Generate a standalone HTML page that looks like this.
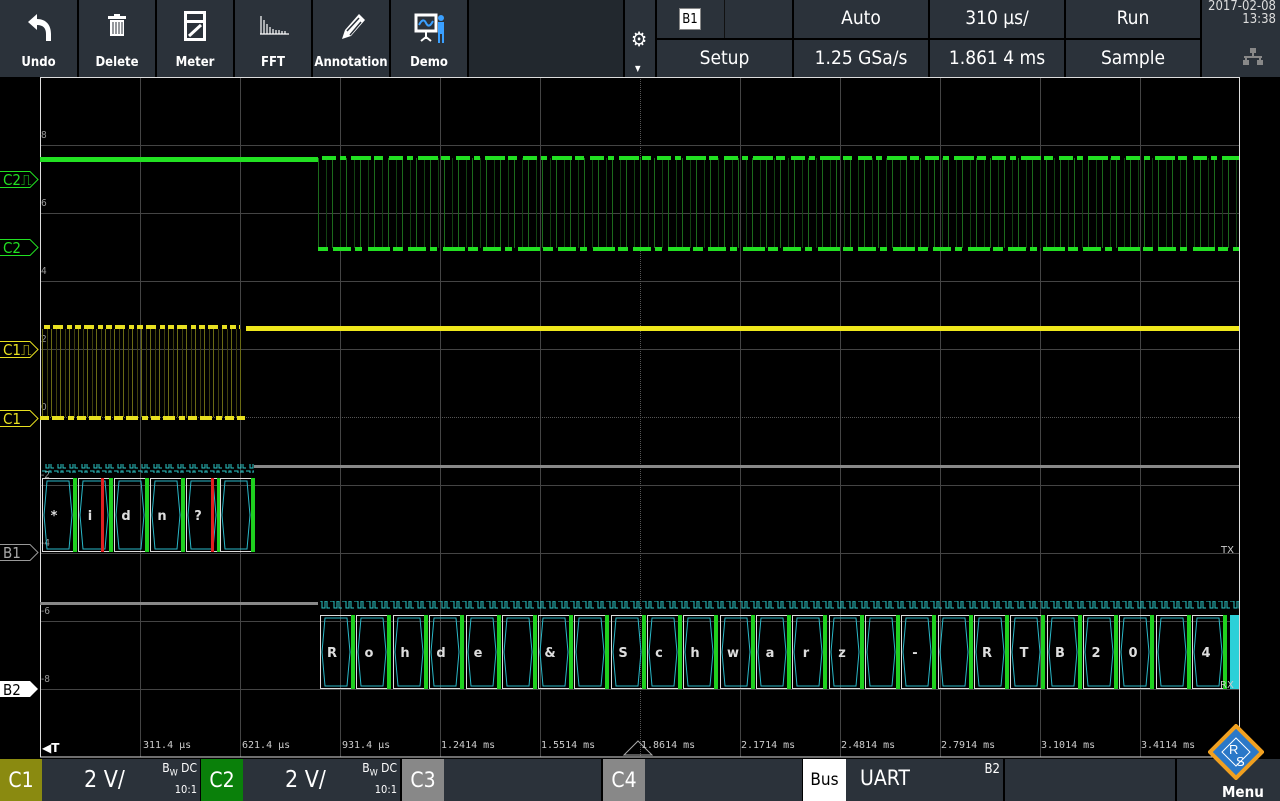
<!DOCTYPE html>
<html><head><meta charset="utf-8"><style>
*{margin:0;padding:0;box-sizing:border-box}
body{width:1280px;height:801px;background:#000;overflow:hidden;position:relative;font-family:"DejaVu Sans Condensed","Liberation Sans Narrow","Liberation Sans",sans-serif;color:#fff}
.a{position:absolute}
.btn{position:absolute;top:0;height:77px;background:#2b323a;text-align:center;font-size:13px;font-weight:bold}
.btn span{position:absolute;left:0;right:0;top:55px}
.cell{position:absolute;background:#2b323a;text-align:center;font-size:19px;line-height:36px}
.bb{position:absolute;top:759px;height:42px;background:#2b323a}
.lab{position:absolute;top:759px;height:42px;font-size:21px;line-height:42px;text-align:center}
.tl{position:absolute;top:740px;font-family:"DejaVu Sans Mono","Liberation Mono",monospace;font-size:10px;color:#ccc}
</style></head><body>
<div class="btn" style="left:0;width:77px"><svg class="a" style="left:24px;top:12px" width="30" height="32" viewBox="0 0 30 32"><path d="M4 10 L13 2 L13 7 C22 7 27 13 27 22 L27 29 L22 29 L22 22 C22 16 19 13 13 13 L13 18 Z" fill="#fff"/></svg><span>Undo</span></div>
<div class="btn" style="left:79px;width:76px"><svg class="a" style="left:29px;top:14px" width="18" height="22"><rect x="0" y="2" width="18" height="3" fill="#fff"/><rect x="6" y="0" width="6" height="3" fill="#fff"/><rect x="2" y="6" width="14" height="16" fill="#fff"/><path d="M5 8v12M8 8v12M11 8v12M14 8v12" stroke="#2b323a" stroke-width="1"/></svg><span>Delete</span></div>
<div class="btn" style="left:157px;width:76px"><svg class="a" style="left:26px;top:10px" width="24" height="32"><rect x="1" y="1" width="22" height="30" fill="#fff"/><rect x="4" y="4" width="16" height="6" fill="#2b323a"/><rect x="4" y="13" width="16" height="15" fill="#2b323a"/><path d="M6 26 L18 15" stroke="#fff" stroke-width="3"/></svg><span>Meter</span></div>
<div class="btn" style="left:235px;width:76px"><svg class="a" style="left:23px;top:14px" width="32" height="22"><path d="M2 20H31M3 2v18M6 6v14M9 10v10M12 13v7M15 15v5M18 16v4M21 16v4M24 17v3M27 17v3" stroke="#fff" stroke-width="1.2"/></svg><span>FFT</span></div>
<div class="btn" style="left:313px;width:76px"><svg class="a" style="left:24px;top:10px" width="30" height="32"><path d="M5 29 L8 20 L22 4 L28 10 L14 26 Z" fill="#fff"/><path d="M10 21 L22 8 M13 25 L24 12" stroke="#2b323a" stroke-width="1.5"/></svg><span>Annotation</span></div>
<div class="btn" style="left:391px;width:76px"><svg class="a" style="left:23px;top:12px" width="32" height="32"><rect x="2" y="3" width="20" height="16" fill="none" stroke="#fff" stroke-width="3"/><path d="M5 13 Q9 5 12 11 T19 9" stroke="#3aa0ff" stroke-width="2" fill="none"/><path d="M12 19v8M7 29l5-4 5 4" stroke="#fff" stroke-width="2" fill="none"/><circle cx="27" cy="6" r="3" fill="#3aa0ff"/><rect x="24" y="10" width="6" height="12" fill="#3aa0ff"/><path d="M25 22v9M29 22v9" stroke="#3aa0ff" stroke-width="2"/></svg><span>Demo</span></div>
<div class="btn" style="left:469px;width:154px;background:#22282e"></div>
<div class="btn" style="left:625px;width:30px"><div class="a" style="left:6px;top:29px;font-size:20px;line-height:20px">⚙</div><div class="a" style="left:10px;top:64px;font-size:8px">▼</div></div>
<div class="cell" style="left:657px;top:0;width:135px;height:38px"><div class="a" style="left:22px;top:8px;width:22px;height:22px;background:#fff;color:#000;font-size:13px;line-height:22px;border:1px solid #888">B1</div><div class="a" style="left:67px;top:0;width:1px;height:38px;background:#111"></div></div>
<div class="cell" style="left:794px;top:0;width:134px;height:38px">Auto</div>
<div class="cell" style="left:930px;top:0;width:134px;height:38px">310 µs/</div>
<div class="cell" style="left:1066px;top:0;width:134px;height:38px">Run</div>
<div class="cell" style="left:657px;top:40px;width:135px;height:37px">Setup</div>
<div class="cell" style="left:794px;top:40px;width:134px;height:37px">1.25 GSa/s</div>
<div class="cell" style="left:930px;top:40px;width:134px;height:37px">1.861 4 ms</div>
<div class="cell" style="left:1066px;top:40px;width:134px;height:37px">Sample</div>
<div class="a" style="left:1202px;top:0;width:78px;height:77px;background:#2b323a;font-size:13px;text-align:right;padding-right:4px;line-height:13px;color:#ddd">2017-02-08<br>13:38<svg class="a" style="left:40px;top:48px" width="22" height="18"><rect x="8" y="0" width="6" height="5" fill="#888"/><path d="M11 5v4M2 9h18M4 9v4M18 9v4" stroke="#888" stroke-width="2"/><rect x="1" y="12" width="6" height="5" fill="#888"/><rect x="15" y="12" width="6" height="5" fill="#888"/></svg></div>

<svg class="a" style="left:0;top:77px" width="1280" height="682" viewBox="0 77 1280 682">
<defs>
<pattern id="gv" x="318" y="0" width="14" height="10" patternUnits="userSpaceOnUse"><rect x="0" width="1" height="10" fill="#1c6a1c"/><rect x="8" width="1" height="10" fill="#124212"/></pattern>
<pattern id="yv" x="42" y="0" width="9" height="10" patternUnits="userSpaceOnUse"><rect x="0" width="1" height="10" fill="#6a6a14"/><rect x="5" width="1" height="10" fill="#40400e"/></pattern>
<pattern id="pl" x="42" y="0" width="12" height="10" patternUnits="userSpaceOnUse"><path d="M0 1H4V8H7V1H9V8H12" stroke="#2cc8c8" stroke-width="1" fill="none"/></pattern>
<g id="fr"><rect x="0.5" y="0.5" width="31" height="73" fill="none" stroke="#ddd" stroke-width="1"/><path d="M5 3H27L30 37L27 71H5L2 37Z" fill="none" stroke="#2ab8c8" stroke-width="1"/><rect x="31" y="0" width="4" height="74" fill="#1fd01f"/></g>
</defs>
<g stroke="#444" stroke-width="1">
<path d="M140.5 77V757M240.5 77V757M340.5 77V757M440.5 77V757M540.5 77V757M740.5 77V757M840.5 77V757M940.5 77V757M1040.5 77V757M1140.5 77V757"/>
<path d="M40 145.5H1239M40 213.5H1239M40 281.5H1239M40 349.5H1239M40 485.5H1239M40 553.5H1239M40 621.5H1239M40 689.5H1239"/>
</g>
<path d="M640.5 77V757M40 417.5H1239" stroke="#555" stroke-dasharray="1 1"/>
<path d="M40.5 77V757H1239.5V77" stroke="#ddd" fill="none"/>
<path d="M40 77.5H1239" stroke="#ddd"/>
<g fill="#999" font-size="10" font-family="DejaVu Sans Condensed,sans-serif"><text x="41" y="138">8</text><text x="41" y="206">6</text><text x="41" y="274">4</text><text x="41" y="342">2</text><text x="41" y="410">0</text><text x="41" y="478">-2</text><text x="41" y="546">-4</text><text x="41" y="614">-6</text><text x="41" y="682">-8</text></g>
<rect x="40" y="157" width="278" height="5" fill="#22e022"/>
<rect x="318" y="158" width="921" height="90" fill="url(#gv)"/>
<path d="M322 158H1239" stroke="#22e022" stroke-width="4" stroke-dasharray="14 4 6 5 20 3 9 6"/>
<path d="M318 249H1239" stroke="#22e022" stroke-width="4" stroke-dasharray="10 5 18 4 7 6 22 3"/>
<rect x="42" y="329" width="203" height="88" fill="url(#yv)"/>
<path d="M44 327H240" stroke="#e8e020" stroke-width="4" stroke-dasharray="6 3 10 4 5 3"/>
<path d="M40 418H245" stroke="#e8e020" stroke-width="4" stroke-dasharray="9 3 12 4 6 3"/>
<rect x="246" y="326" width="993" height="5" fill="#f0e81c"/>
<rect x="42" y="464" width="212" height="9" fill="url(#pl)"/>
<path d="M254 466.5H1239M40 603.5H318" stroke="#888" stroke-width="3"/>
<g><use href="#fr" x="42" y="478"/><use href="#fr" x="78" y="478"/><use href="#fr" x="114" y="478"/><use href="#fr" x="150" y="478"/><use href="#fr" x="186" y="478"/><use href="#fr" x="220" y="478"/></g>
<rect x="101" y="478" width="3" height="74" fill="#e02020"/><rect x="211" y="478" width="3" height="74" fill="#e02020"/>
<g fill="#ddd" font-size="13" font-weight="bold" font-family="DejaVu Sans,sans-serif" text-anchor="middle"><text x="54" y="520">*</text><text x="90" y="520">i</text><text x="126" y="520">d</text><text x="162" y="520">n</text><text x="198" y="520">?</text></g>
<rect x="320" y="601" width="919" height="9" fill="url(#pl)"/>
<g>
<use href="#fr" x="320" y="615"/><use href="#fr" x="356" y="615"/><use href="#fr" x="393" y="615"/><use href="#fr" x="429" y="615"/><use href="#fr" x="466" y="615"/><use href="#fr" x="502" y="615"/><use href="#fr" x="538" y="615"/><use href="#fr" x="574" y="615"/><use href="#fr" x="611" y="615"/><use href="#fr" x="647" y="615"/><use href="#fr" x="683" y="615"/><use href="#fr" x="720" y="615"/><use href="#fr" x="756" y="615"/><use href="#fr" x="792" y="615"/><use href="#fr" x="829" y="615"/><use href="#fr" x="865" y="615"/><use href="#fr" x="901" y="615"/><use href="#fr" x="938" y="615"/><use href="#fr" x="974" y="615"/><use href="#fr" x="1010" y="615"/><use href="#fr" x="1047" y="615"/><use href="#fr" x="1083" y="615"/><use href="#fr" x="1119" y="615"/><use href="#fr" x="1156" y="615"/><use href="#fr" x="1192" y="615"/>
</g>
<rect x="1230" y="615" width="9" height="74" fill="#2cd0d8"/>
<g fill="#ddd" font-size="13" font-weight="bold" font-family="DejaVu Sans,sans-serif" text-anchor="middle"><text x="332" y="657">R</text><text x="369" y="657">o</text><text x="405" y="657">h</text><text x="441" y="657">d</text><text x="478" y="657">e</text><text x="550" y="657">&amp;</text><text x="623" y="657">S</text><text x="659" y="657">c</text><text x="695" y="657">h</text><text x="733" y="657">w</text><text x="770" y="657">a</text><text x="806" y="657">r</text><text x="842" y="657">z</text><text x="915" y="657">-</text><text x="987" y="657">R</text><text x="1024" y="657">T</text><text x="1060" y="657">B</text><text x="1096" y="657">2</text><text x="1133" y="657">0</text><text x="1206" y="657">4</text></g>
<g fill="#ccc" font-size="10" font-family="DejaVu Sans,sans-serif"><text x="1221" y="553">TX</text><text x="1220" y="688">RX</text></g>
<g font-size="15" font-family="DejaVu Sans Condensed,sans-serif">
<path d="M0 171.5H30L38 179.5L30 187.5H0" fill="#000" stroke="#22e022"/><text x="3" y="185" fill="#22e022">C2⎍</text>
<path d="M0 239.5H30L38 247.5L30 255.5H0" fill="#000" stroke="#22e022"/><text x="3" y="253" fill="#22e022">C2</text>
<path d="M0 341.5H30L38 349.5L30 357.5H0" fill="#000" stroke="#e8e020"/><text x="3" y="355" fill="#e8e020">C1⎍</text>
<path d="M0 410.5H30L38 418.5L30 426.5H0" fill="#000" stroke="#e8e020"/><text x="3" y="424" fill="#e8e020">C1</text>
<path d="M0 544.5H30L38 552.5L30 560.5H0" fill="#000" stroke="#999"/><text x="3" y="558" fill="#aaa">B1</text>
<path d="M0 681H30L38 689L30 697H0Z" fill="#fff"/><text x="3" y="695" fill="#000">B2</text>
</g>
<text x="42" y="752" fill="#fff" font-size="12" font-weight="bold" font-family="DejaVu Sans,sans-serif">◀T</text>
<path d="M624 755L638 741L652 755Z" fill="none" stroke="#aaa"/>
</svg>
<div class="tl" style="left:143px">311.4 µs</div><div class="tl" style="left:242px">621.4 µs</div><div class="tl" style="left:342px">931.4 µs</div><div class="tl" style="left:441px">1.2414 ms</div><div class="tl" style="left:541px">1.5514 ms</div><div class="tl" style="left:641px">1.8614 ms</div><div class="tl" style="left:741px">2.1714 ms</div><div class="tl" style="left:841px">2.4814 ms</div><div class="tl" style="left:941px">2.7914 ms</div><div class="tl" style="left:1041px">3.1014 ms</div><div class="tl" style="left:1141px">3.4114 ms</div>

<div class="lab" style="left:0;width:42px;background:#8a8a10">C1</div>
<div class="bb" style="left:42px;width:158px"><div class="a" style="left:42px;top:8px;font-size:23px">2 V/</div><div class="a" style="right:3px;top:2px;font-size:12px">B<sub style="font-size:9px">W</sub> DC</div><div class="a" style="right:3px;top:24px;font-size:11px">10:1</div></div>
<div class="lab" style="left:201px;width:42px;background:#0a800a">C2</div>
<div class="bb" style="left:243px;width:157px"><div class="a" style="left:42px;top:8px;font-size:23px">2 V/</div><div class="a" style="right:3px;top:2px;font-size:12px">B<sub style="font-size:9px">W</sub> DC</div><div class="a" style="right:3px;top:24px;font-size:11px">10:1</div></div>
<div class="lab" style="left:402px;width:42px;background:#888">C3</div>
<div class="bb" style="left:444px;width:157px"></div>
<div class="lab" style="left:603px;width:42px;background:#888">C4</div>
<div class="bb" style="left:645px;width:157px"></div>
<div class="lab" style="left:803px;width:43px;background:#fff;color:#000;font-size:17px">Bus</div>
<div class="bb" style="left:846px;width:157px"><div class="a" style="left:14px;top:7px;font-size:21px">UART</div><div class="a" style="right:3px;top:3px;font-size:13px">B2</div></div>
<div class="bb" style="left:1005px;width:170px"></div>
<div class="bb" style="left:1177px;width:103px;background:#2b323a"></div>
<svg class="a" style="left:1208px;top:724px" width="56" height="56"><path d="M28 2L54 28L28 54L2 28Z" fill="#2a78c8" stroke="#f0a020" stroke-width="4"/><path d="M28 14L42 28L28 42L14 28Z" fill="none" stroke="#fff" stroke-width="1"/><text x="21" y="30" fill="#fff" font-size="13" font-family="Liberation Sans">R</text><text x="28" y="42" fill="#fff" font-size="13" font-family="Liberation Sans">S</text></svg>
<div class="a" style="left:1222px;top:783px;font-size:15px;font-weight:bold">Menu</div>
</body></html>
